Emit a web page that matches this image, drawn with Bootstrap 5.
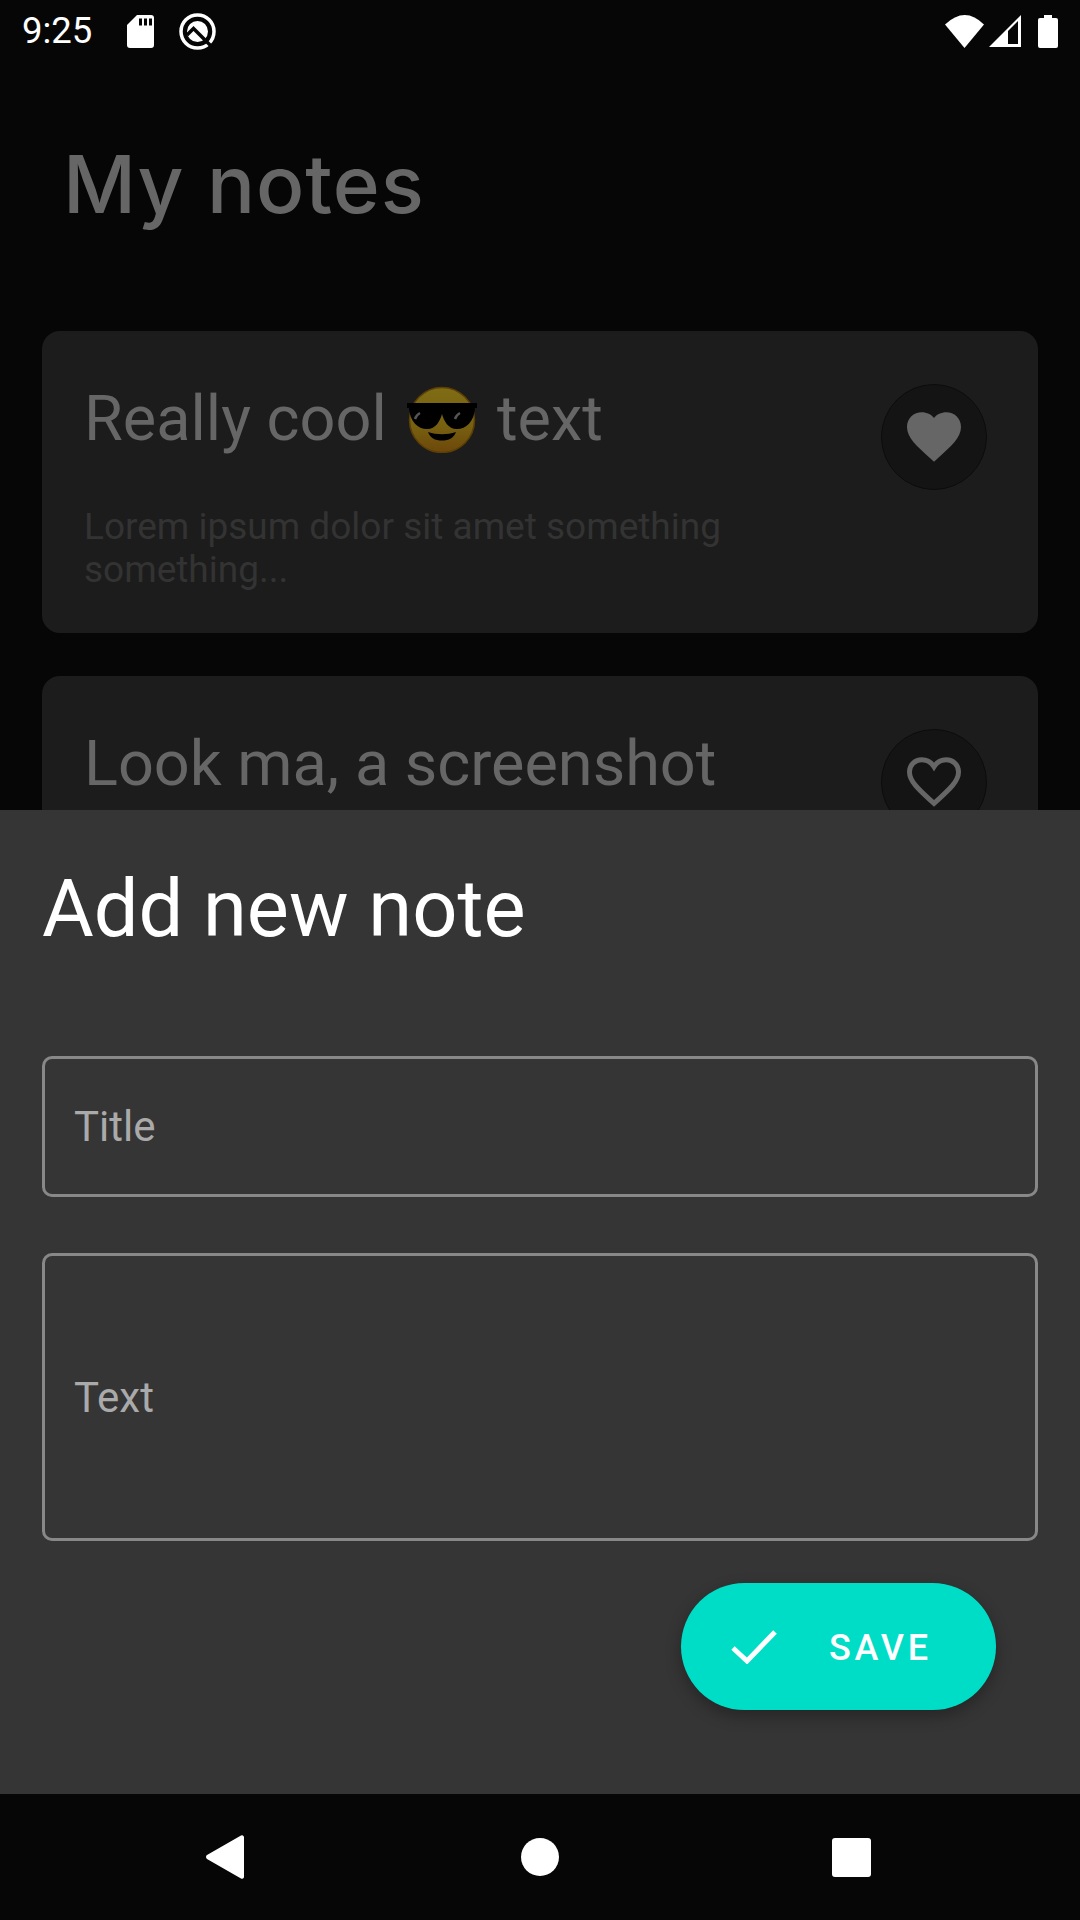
<!DOCTYPE html>
<html lang="en">
<head>
<meta charset="UTF-8">
<title>My notes</title>
<link href="https://cdn.jsdelivr.net/npm/bootstrap@5.3.0/dist/css/bootstrap.min.css" rel="stylesheet">
<style>
body { width: 1080px; height: 1920px; overflow: hidden; background: #060606; font-family: Roboto, "Liberation Sans", sans-serif; }
.backdrop { height: 810px; overflow: hidden; background: #060606; }
.status-bar { height: 63px; padding: 0 22px; color: #fff; }
.status-time { font-size: 36.500px; line-height: 1; width: 81px; }
.q-icon { margin-left: 25px; }
.page-title { font-family: Inter, "Open Sans", sans-serif; font-weight: 500; font-size: 80px; line-height: 90px; color: #666; margin: 76px 0 0 63px; letter-spacing: 1px; }
.note-list { padding: 0 42px; margin-top: 102px; gap: 43px; }
.note-card { background: #1c1c1c; border: 0; border-radius: 18px; height: 302px; padding: 52px 42px 0; }
.note-title { font-size: 63px; line-height: 72px; font-weight: 400; color: #666; margin: 0; }
.note-text { font-size: 37px; line-height: 43px; color: #333; margin: 50px 0 0; width: 720px; }
.emoji { width: 72px; height: 68px; vertical-align: -13px; margin: 0 3px 0 4px; }
.fav-btn { width: 106px; height: 106px; background: #141414; border: 1px solid #0c0c0c; margin-right: 9px; margin-top: 1px; }
.sheet { height: 984px; background: #353535; padding: 0 42px; }
.sheet-title { font-size: 79.400px; line-height: 90px; font-weight: 400; color: #fff; margin: 54px 0 0; }
.note-field { background: transparent; border: 3px solid #888; border-radius: 10px; padding: 0 29px; font-size: 42px; color: #aaa; }
.title-field { height: 141px; margin-top: 102px; }
.text-field { height: 288px; margin-top: 56px; }
.save-btn { width: 315px; height: 127px; margin: 42px 42px 0 auto; background: #00ddc7; color: #fff; border: 0; font-weight: 500; font-size: 36px; letter-spacing: 3.8px; box-shadow: 0 6px 16px rgba(0,0,0,.3); padding: 0 64px 0 50px; }
.save-label { padding-top: 2px; }
.nav-bar { height: 126px; background: #060606; padding: 0 209px 0 206px; }
.nav-home { margin-left: 3px; }
</style>
</head>
<body>
  <div class="backdrop">
    <div class="status-bar d-flex align-items-center">
      <span class="status-time">9:25</span>
      <svg class="ms-4" width="27" height="33" viewBox="0 0 27 33" fill="#fff"><path d="M10 0h14a3 3 0 0 1 3 3v27a3 3 0 0 1-3 3H3a3 3 0 0 1-3-3V10z"/><path d="M12 3.500h3v7h-3zM17 3.500h3v7h-3zM22 3.500h3v7h-3z" fill="#060606"/></svg>
      <svg class="q-icon" width="37" height="37" viewBox="0 0 37 37"><circle cx="18.500" cy="18.500" r="16.500" fill="none" stroke="#fff" stroke-width="3.500"/><circle cx="18.500" cy="18.500" r="10.500" fill="#fff"/><path d="M8 22 14.500 15.500 34 35" fill="none" stroke="#060606" stroke-width="3.500"/></svg>
      <span class="ms-auto d-flex align-items-center">
        <svg width="40" height="33" viewBox="0 0 40 33" fill="#fff"><path d="M0 9.500Q20-9.500 39 9.500L19.500 33z"/></svg>
        <svg class="ms-1" width="33" height="33" viewBox="0 0 33 33"><path d="M0 32 32 0v32z" fill="#fff"/><path d="M19 29V16l10-10v23z" fill="#060606"/></svg>
        <svg class="ms-3" width="20" height="33" viewBox="0 0 20 33" fill="#fff"><path d="M6 0h8v3h4a2 2 0 0 1 2 2v26a2 2 0 0 1-2 2H2a2 2 0 0 1-2-2V5a2 2 0 0 1 2-2h4z"/></svg>
      </span>
    </div>
    <h1 class="page-title">My notes</h1>
    <div class="note-list d-flex flex-column">
      <div class="card note-card">
        <div class="d-flex justify-content-between">
          <div>
            <h2 class="note-title">Really cool <svg class="emoji" viewBox="0 0 72 68"><defs><linearGradient id="emojiFace" x1="0" y1="0" x2="0" y2="1"><stop offset="0" stop-color="#7f6c14"/><stop offset=".6" stop-color="#776010"/><stop offset="1" stop-color="#6d470a"/></linearGradient></defs><circle cx="36" cy="35" r="32.500" fill="url(#emojiFace)" stroke="#5c3f05" stroke-width="1.500"/><path d="M1 18h70v5h-2c-1 14-9 21-18 21-9 0-13-8-15-15-2 7-6 15-15 15-9 0-17-7-18-21H1z" fill="#000"/><path d="M22 47c9 3 19 3 28 0-2 6-7 8.500-14 8.500S24 53 22 47z" fill="#000"/><path d="M9 34c1-3 3-5 5-6M49 34c1-3 3-5 5-6" fill="none" stroke="#555" stroke-width="2.500"/></svg> text</h2>
            <p class="note-text">Lorem ipsum dolor sit amet something something...</p>
          </div>
          <div class="fav-btn rounded-circle d-flex align-items-center justify-content-center flex-shrink-0">
            <svg width="54" height="50" viewBox="0 0 24 22" fill="#666"><path d="M12 22 10.300 20.400C4.200 14.900 0 11.100 0 6.500 0 2.700 3 0 6.600 0 8.700 0 10.800 1 12 2.500 13.200 1 15.300 0 17.400 0 21 0 24 2.700 24 6.500c0 4.600-4.200 8.400-10.300 13.900z"/></svg>
          </div>
        </div>
      </div>
      <div class="card note-card">
        <div class="d-flex justify-content-between">
          <div>
            <h2 class="note-title">Look ma, a screenshot</h2>
          </div>
          <div class="fav-btn rounded-circle d-flex align-items-center justify-content-center flex-shrink-0">
            <svg width="54" height="50" viewBox="0 0 24 22" fill="none" stroke="#666" stroke-width="2.200"><path d="M12 20.500 11 19.600C5.300 14.400 1.100 10.700 1.100 6.500 1.100 3.400 3.500 1.100 6.600 1.100 8.600 1.100 10.800 2.200 12 4.200 13.200 2.200 15.400 1.100 17.400 1.100 20.500 1.100 22.900 3.400 22.900 6.500c0 4.200-4.200 7.900-9.900 13.100z"/></svg>
          </div>
        </div>
      </div>
    </div>
  </div>
  <div class="sheet d-flex flex-column">
    <h2 class="sheet-title">Add new note</h2>
    <div class="note-field title-field d-flex align-items-center">Title</div>
    <div class="note-field text-field d-flex align-items-center">Text</div>
    <button class="btn save-btn rounded-pill d-flex align-items-center justify-content-between" type="button">
      <svg width="46" height="35" viewBox="0 0 46 35" fill="none" stroke="#fff" stroke-width="5"><path d="M2 19 16 32 44 3"/></svg>
      <span class="save-label">SAVE</span>
    </button>
  </div>
  <div class="nav-bar d-flex align-items-center justify-content-between">
    <svg width="38" height="44" viewBox="0 0 38 44" fill="#fff"><path d="M35 .5a2 2 0 0 1 3 1.500v40a2 2 0 0 1-3 1.500L1 24a2.500 2.500 0 0 1 0-4z"/></svg>
    <svg class="nav-home" width="38" height="38" viewBox="0 0 38 38" fill="#fff"><circle cx="19" cy="19" r="19"/></svg>
    <svg width="39" height="39" viewBox="0 0 39 39" fill="#fff"><rect width="39" height="39" rx="3"/></svg>
  </div>
</body>
</html>
